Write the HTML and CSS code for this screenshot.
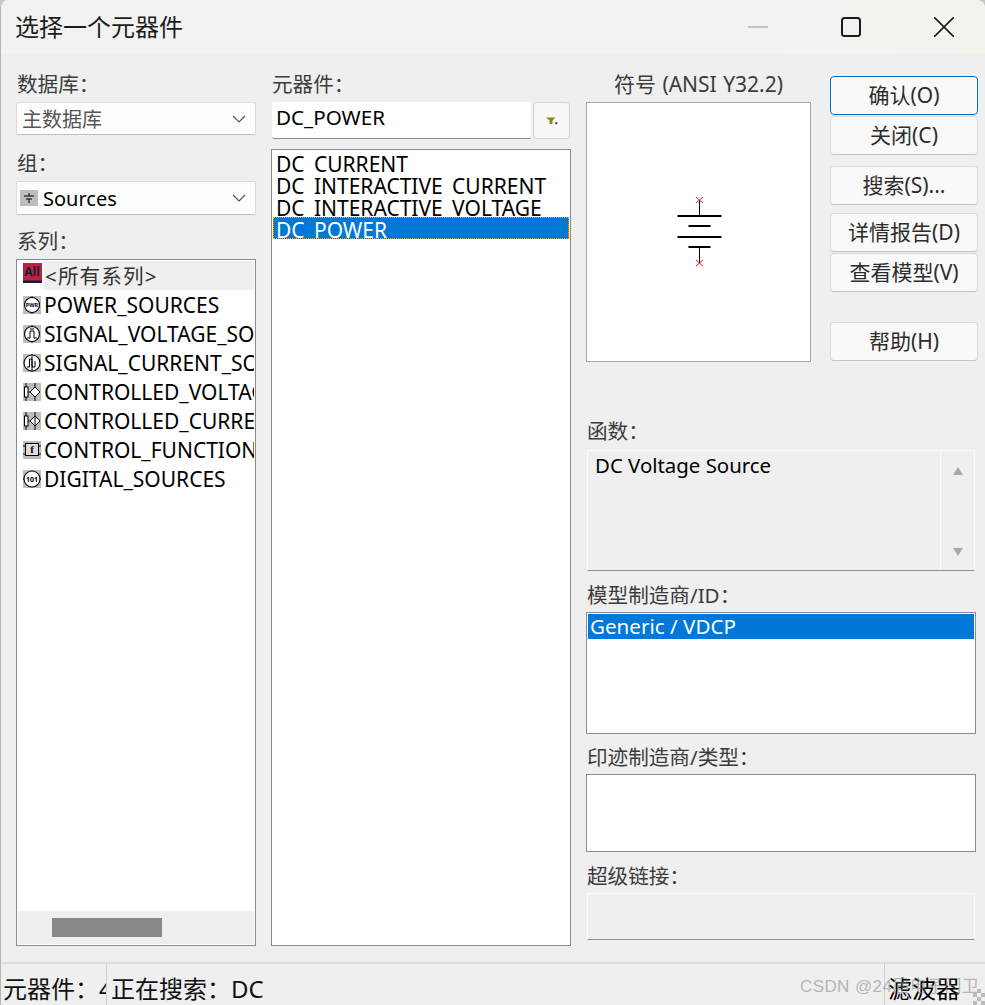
FILE: index.html
```html
<!DOCTYPE html>
<html lang="zh-CN">
<head>
<meta charset="utf-8">
<title>选择一个元器件</title>
<link rel="stylesheet" href="styles.css">
</head>
<body>
<div class="window">
  <header class="titlebar">
    <div class="title">选择一个元器件</div>
    <div class="win-controls">
      <svg class="win-btn" viewBox="0 0 20 20"><path d="M0 10H20" stroke="#c4c2c0" stroke-width="2"/></svg>
      <svg class="win-btn" viewBox="0 0 20 20"><rect x="1" y="1" width="18" height="18" rx="2.5" fill="none" stroke="#1c1c1c" stroke-width="2"/></svg>
      <svg class="win-btn" viewBox="0 0 20 20"><path d="M0 0L20 20M20 0L0 20" stroke="#1c1c1c" stroke-width="1.6"/></svg>
    </div>
  </header>

  <main class="main">
    <section class="col-left">
      <div class="label">数据库：</div>
      <div class="select select-db">
        <span class="select-text muted">主数据库</span>
        <svg class="chevron" viewBox="0 0 14 8"><path d="M1 1L7 7L13 1" fill="none" stroke="#555" stroke-width="1.2"/></svg>
      </div>
      <div class="label label-group">组：</div>
      <div class="select select-group">
        <svg class="group-icon" viewBox="0 0 18 16"><rect width="18" height="16" fill="#bdbdbd"/><path d="M9 3V6M4 6H14M6 9H12M9 9V13" stroke="#000" fill="none"/></svg>
        <span class="select-text">Sources</span>
        <svg class="chevron" viewBox="0 0 14 8"><path d="M1 1L7 7L13 1" fill="none" stroke="#555" stroke-width="1.2"/></svg>
      </div>
      <div class="label label-series">系列：</div>
      <div class="list series-list">
        <div class="series-rows">
          <div class="series-row">
            <svg class="series-icon" viewBox="0 0 20 20"><rect width="20" height="20" fill="#c01f3e"/><rect y="17.500" width="20" height="2.500" fill="#10203a"/><text x="10" y="13" class="icon-all">All</text></svg>
            <span class="series-name series-name-active">&lt;所有系列&gt;</span>
          </div>
          <div class="series-row">
            <svg class="series-icon" viewBox="0 0 18 18"><rect width="18" height="18" fill="#bdbdbd"/><path d="M9 0V18" stroke="#000"/><circle cx="9" cy="9" r="7.500" fill="#fff" stroke="#000" stroke-width="1.100"/><text x="9" y="11" class="icon-tiny">PWR</text></svg>
            <span class="series-name">POWER_SOURCES</span>
          </div>
          <div class="series-row">
            <svg class="series-icon" viewBox="0 0 18 18"><rect width="18" height="18" fill="#bdbdbd"/><path d="M9 0V18" stroke="#000"/><circle cx="9" cy="9" r="7.500" fill="#fff" stroke="#000" stroke-width="1.100"/><path d="M4 13H7V6H11V13H14" fill="none" stroke="#000"/><path d="M7 4H11" stroke="#000"/></svg>
            <span class="series-name">SIGNAL_VOLTAGE_SOURCES</span>
          </div>
          <div class="series-row">
            <svg class="series-icon" viewBox="0 0 18 18"><rect width="18" height="18" fill="#bdbdbd"/><path d="M9 0V18" stroke="#000"/><circle cx="9" cy="9" r="8" fill="#fff" stroke="#000" stroke-width="1.100"/><path d="M4 13H6.500V5H9V13H12V7" fill="none" stroke="#000"/><path d="M9 2V16" stroke="#000"/></svg>
            <span class="series-name">SIGNAL_CURRENT_SOURCES</span>
          </div>
          <div class="series-row">
            <svg class="series-icon" viewBox="0 0 18 18"><rect width="18" height="18" fill="#bdbdbd"/><path d="M3 0V4M3 14V18M12 0V18" stroke="#000"/><rect x="1.500" y="4" width="3.500" height="10" fill="#fff" stroke="#000"/><path d="M12 4L17 9L12 14L7 9Z" fill="#fff" stroke="#000"/><path d="M5 9H7" stroke="#000"/></svg>
            <span class="series-name">CONTROLLED_VOLTAGE_SOURCES</span>
          </div>
          <div class="series-row">
            <svg class="series-icon" viewBox="0 0 18 18"><rect width="18" height="18" fill="#bdbdbd"/><path d="M3 0V4M3 14V18M12 0V18" stroke="#000"/><rect x="1.500" y="4" width="3.500" height="10" fill="#fff" stroke="#000"/><path d="M12 4L17 9L12 14L7 9Z" fill="#fff" stroke="#000"/><path d="M12 5V13M5 9H7" stroke="#000"/></svg>
            <span class="series-name">CONTROLLED_CURRENT_SOURCES</span>
          </div>
          <div class="series-row">
            <svg class="series-icon" viewBox="0 0 18 18"><rect width="18" height="18" fill="#bdbdbd"/><path d="M0 5H3M0 13H3M15 5H18M15 13H18" stroke="#000"/><rect x="2.500" y="2.500" width="13" height="12" fill="#ddd" stroke="#000"/><text x="9" y="12" class="icon-f">f</text></svg>
            <span class="series-name">CONTROL_FUNCTION_BLOCKS</span>
          </div>
          <div class="series-row">
            <svg class="series-icon" viewBox="0 0 18 18"><rect width="18" height="18" fill="#bdbdbd"/><path d="M0 9H18" stroke="#000"/><circle cx="9" cy="9" r="8" fill="#fff" stroke="#000" stroke-width="1.100"/><text x="9" y="11.500" class="icon-101">101</text></svg>
            <span class="series-name">DIGITAL_SOURCES</span>
          </div>
        </div>
        <div class="hscroll"><div class="hscroll-thumb"></div></div>
      </div>
    </section>

    <section class="col-mid">
      <div class="label">元器件：</div>
      <div class="search-row">
        <div class="search-input">DC_POWER</div>
        <div class="filter-btn">
          <svg class="filter-icon" viewBox="0 0 12 8"><path d="M0 .5H9.500L6.500 3.500V7H3.500V3.500Z" fill="#8c8c14"/><path d="M8.500 5.500H12L10.250 7.500Z" fill="#222"/></svg>
        </div>
      </div>
      <div class="list comp-list">
        <div class="comp-row">DC_CURRENT</div>
        <div class="comp-row">DC_INTERACTIVE_CURRENT</div>
        <div class="comp-row">DC_INTERACTIVE_VOLTAGE</div>
        <div class="comp-row comp-row-selected">DC_POWER</div>
      </div>
    </section>

    <section class="col-right">
      <div class="top-row">
        <div class="symbol-col">
          <div class="label label-center">符号 (ANSI Y32.2)</div>
          <div class="symbol-box">
            <svg class="symbol" viewBox="0 0 46 66" width="46" height="66">
              <path d="M23.500 1V17M23.500 48V64" stroke="#000" stroke-width="1"/>
              <path d="M1.500 17H45.500M12.500 27H34.500M1.500 38H45.500M12.500 48H34.500" stroke="#000" stroke-width="2"/>
              <path d="M20 -2L27 4M27 -2L20 4M20 61L27 67M27 61L20 67" stroke="#e8202a" stroke-width="1"/>
            </svg>
          </div>
        </div>
        <div class="buttons">
          <div class="btn-group">
            <div class="btn btn-default">确认(O)</div>
            <div class="btn">关闭(C)</div>
          </div>
          <div class="btn-group btn-group-search">
            <div class="btn">搜索(S)...</div>
          </div>
          <div class="btn-group btn-group-detail">
            <div class="btn">详情报告(D)</div>
            <div class="btn">查看模型(V)</div>
          </div>
          <div class="btn-group btn-group-help">
            <div class="btn">帮助(H)</div>
          </div>
        </div>
      </div>

      <div class="label label-func">函数：</div>
      <div class="func-box">
        <div class="func-text">DC Voltage Source</div>
        <div class="func-scroll">
          <svg class="arrow" viewBox="0 0 12 10"><path d="M6 1L11 9H1Z" fill="#a9a9a9"/></svg>
          <svg class="arrow" viewBox="0 0 12 10"><path d="M6 9L11 1H1Z" fill="#a9a9a9"/></svg>
        </div>
      </div>

      <div class="label label-model">模型制造商/ID：</div>
      <div class="list model-list">
        <div class="model-row">Generic / VDCP</div>
      </div>

      <div class="label label-foot">印迹制造商/类型：</div>
      <div class="list foot-list"></div>

      <div class="label label-link">超级链接：</div>
      <div class="link-box"></div>
    </section>
  </main>

  <footer class="status">
    <div class="status-cell status-count">元器件：4</div>
    <div class="status-cell status-search">正在搜索：DC</div>
    <div class="status-cell status-filter">滤波器</div>
    <div class="watermark">CSDN @24届电子门卫</div>
    <div class="grip"></div>
  </footer>
</div>
</body>
</html>
```
FILE: styles.css
```css
* { box-sizing: border-box; }
html, body { margin: 0; padding: 0; background: #c8c8c8; }
body {
  font-family: "Noto Sans", "Noto Sans CJK SC", sans-serif;
  font-size: 20.6px;
  color: #000;
}
.window {
  position: relative;
  width: 985px;
  height: 1005px;
  display: flex;
  flex-direction: column;
  background: #efefef;
  border-left: 1px solid #b4b4b4;
  border-top-left-radius: 8px;
  border-top-right-radius: 8px;
  overflow: hidden;
}
.titlebar {
  height: 54px;
  flex: none;
  display: flex;
  align-items: center;
  justify-content: space-between;
  background: linear-gradient(90deg, #f2f2f2, #f5f2ee);
}
.title {
  margin-left: 14px;
  font-size: 24px;
  line-height: 54px;
  color: #1c1c1c;
}
.win-controls {
  display: flex;
  gap: 73px;
  margin-right: 31px;
}
.win-btn { width: 20px; height: 20px; display: block; }

.main {
  flex: 1;
  min-height: 0;
  display: flex;
  padding: 21px 0 0 15px;
}
.label {
  height: 18px;
  line-height: 18px;
  margin-bottom: 9px;
  white-space: nowrap;
  color: #3c3c3c;
  padding-left: 1px;
}
.label-center {
  font-size: 21px;
  word-spacing: 1px;
  text-align: center;
  padding-left: 0;
}

.col-left { width: 240px; flex: none; }
.select {
  height: 33px;
  display: flex;
  align-items: center;
  background: #fdfdfd;
  border: 1px solid #dcdcdc;
  border-bottom-color: #bdbdbd;
  border-radius: 2px;
  padding: 0 9px 0 5px;
}
.select-group { height: 34px; padding-left: 3px; }
.select-text { flex: 1; font-size: 20px; line-height: 28px; padding-top: 2px; }
.muted { color: #555; }
.chevron { width: 14px; height: 8px; flex: none; }
.group-icon { width: 18px; height: 16px; margin-right: 5px; flex: none; }
.label-group { margin-top: 19px; }
.label-series { margin-top: 17px; }

.list { background: #fff; border: 1px solid #8a8a94; }
.series-list {
  height: 687px;
  display: flex;
  flex-direction: column;
  overflow: hidden;
}
.series-rows { flex: 1; padding: 1px 1px 0 6px; overflow: hidden; }
.series-row {
  height: 29px;
  display: flex;
  align-items: center;
  overflow: hidden;
}
.series-icon { width: 18px; height: 18px; flex: none; margin-right: 3px; }
.series-row:first-child .series-icon { width: 20px; height: 20px; margin-left: -1px; margin-right: 2px; margin-top: -5px; }
.series-name { white-space: nowrap; font-size: 21px; height: 29px; line-height: 31px; color: #000; flex: 1; }
.series-name-active {
  background: #efefef;
  color: #333;
  padding-left: 1px;
  font-size: 20.6px;
  letter-spacing: 1.100px;
}
.icon-all { font-size: 12px; font-weight: 700; text-anchor: middle; fill: #10203a; font-family: "Noto Sans", sans-serif; }
.icon-tiny { font-size: 5.500px; font-weight: 700; text-anchor: middle; fill: #000; font-family: "Noto Sans", sans-serif; }
.icon-f { font-size: 11px; font-weight: 700; text-anchor: middle; fill: #000; font-family: "Liberation Serif", serif; }
.icon-101 { font-size: 7px; font-weight: 700; text-anchor: middle; fill: #000; font-family: "Noto Sans", sans-serif; }
.hscroll {
  height: 33px;
  flex: none;
  margin: 0 1px 1px 1px;
  padding: 7px 0 0 34px;
  background: #efefef;
}
.hscroll-thumb { width: 110px; height: 19px; background: #888; }

.col-mid { width: 300px; flex: none; margin-left: 15px; }
.search-row { display: flex; align-items: stretch; height: 37px; gap: 2px; margin-left: 1px; margin-right: 1px; }
.search-input {
  flex: 1;
  background: #fff;
  border-bottom: 1px solid #8a8a8a;
  border-radius: 2px;
  padding-left: 4px;
  line-height: 31px;
  color: #000;
}
.filter-btn {
  width: 37px;
  background: #f8f8f8;
  border: 1px solid #d4d4d4;
  border-radius: 4px;
  display: flex;
  align-items: center;
  justify-content: center;
}
.filter-icon { width: 12px; height: 8px; margin-top: 1px; }
.comp-list { margin-top: 10px; height: 797px; padding: 1px 1px 0 1px; }
.comp-row {
  height: 22px;
  line-height: 22px;
  padding-top: 2px;
  padding-left: 3px;
  font-size: 21px;
  white-space: nowrap;
  overflow: hidden;
  background: #fff;
}
.comp-row-selected {
  background: #0078d7;
  color: #fff;
  outline: 1px dotted #f59a23;
  outline-offset: -1px;
}

.col-right { width: 390px; flex: none; margin-left: 15px; }
.top-row { display: flex; height: 287px; }
.symbol-col { width: 225px; flex: none; }
.symbol-box {
  height: 260px;
  background: #fff;
  border: 1px solid #a4a4a4;
  display: flex;
  align-items: center;
  justify-content: center;
}
.symbol { display: block; overflow: visible; }
.buttons { width: 148px; flex: none; margin-left: 19px; padding-top: 1px; }
.btn-group { display: flex; flex-direction: column; gap: 1px; }
.btn-group-search { margin-top: 11px; }
.btn-group-detail { margin-top: 8px; }
.btn-group-help { margin-top: 30px; }
.btn {
  height: 39px;
  font-size: 21px;
  line-height: 37px;
  text-align: center;
  background: #f9f9f9;
  border: 1px solid #dadada;
  border-bottom-color: #c4c4c4;
  border-radius: 4px;
  color: #2c2c2c;
  white-space: nowrap;
}
.btn-default { border-color: #0a6cc0; }

.label-func { margin-top: 60px; margin-bottom: 10px; }
.func-box {
  height: 121px;
  margin: 0 1px;
  display: flex;
  border: 1px solid #fbfbfb;
  border-bottom-color: #8c8c8c;
}
.func-text { flex: 1; padding-left: 7px; font-size: 20.4px; line-height: 28px; }
.func-scroll {
  width: 34px;
  border-left: 1px solid #fbfbfb;
  display: flex;
  flex-direction: column;
  justify-content: space-between;
  align-items: center;
  padding: 15px 0 13px;
}
.arrow { width: 12px; height: 10px; display: block; }

.label-model { margin-top: 15px; margin-bottom: 8px; }
.model-list { height: 122px; padding: 1px; }
.model-row {
  height: 25px;
  line-height: 25px;
  padding-left: 2px;
  background: #0078d7;
  color: #fff;
}
.label-foot { margin-top: 14px; margin-bottom: 8px; }
.foot-list { height: 78px; }
.label-link { margin-top: 15px; margin-bottom: 8px; }
.link-box {
  height: 47px;
  margin: 0 1px;
  border: 1px solid #fbfbfb;
  border-bottom-color: #8c8c8c;
}

.status {
  height: 43px;
  flex: none;
  display: flex;
  border-top: 2px solid #dcdcdc;
  font-size: 24px;
  color: #111;
}
.status-cell { height: 41px; line-height: 50px; white-space: nowrap; overflow: hidden; }
.status-count { width: 106px; padding-left: 2px; border-right: 1px solid #d0d0d0; flex: none; }
.status-search { flex: 1; padding-left: 4px; }
.status-filter { width: 101px; flex: none; padding-left: 3px; border-left: 1px solid #d0d0d0; color: #000; }
.watermark {
  position: absolute;
  left: 799px;
  bottom: 7px;
  font-family: "Liberation Sans", "Noto Sans CJK SC", sans-serif;
  font-size: 17px;
  line-height: 22px;
  letter-spacing: .4px;
  color: rgba(130, 130, 130, .55);
  white-space: nowrap;
}
.grip {
  position: absolute;
  right: 0;
  bottom: 0;
  width: 12px;
  height: 16px;
  background: repeating-conic-gradient(#bbb 0 25%, transparent 0 50%) 0 0 / 8px 8px;
}
```
